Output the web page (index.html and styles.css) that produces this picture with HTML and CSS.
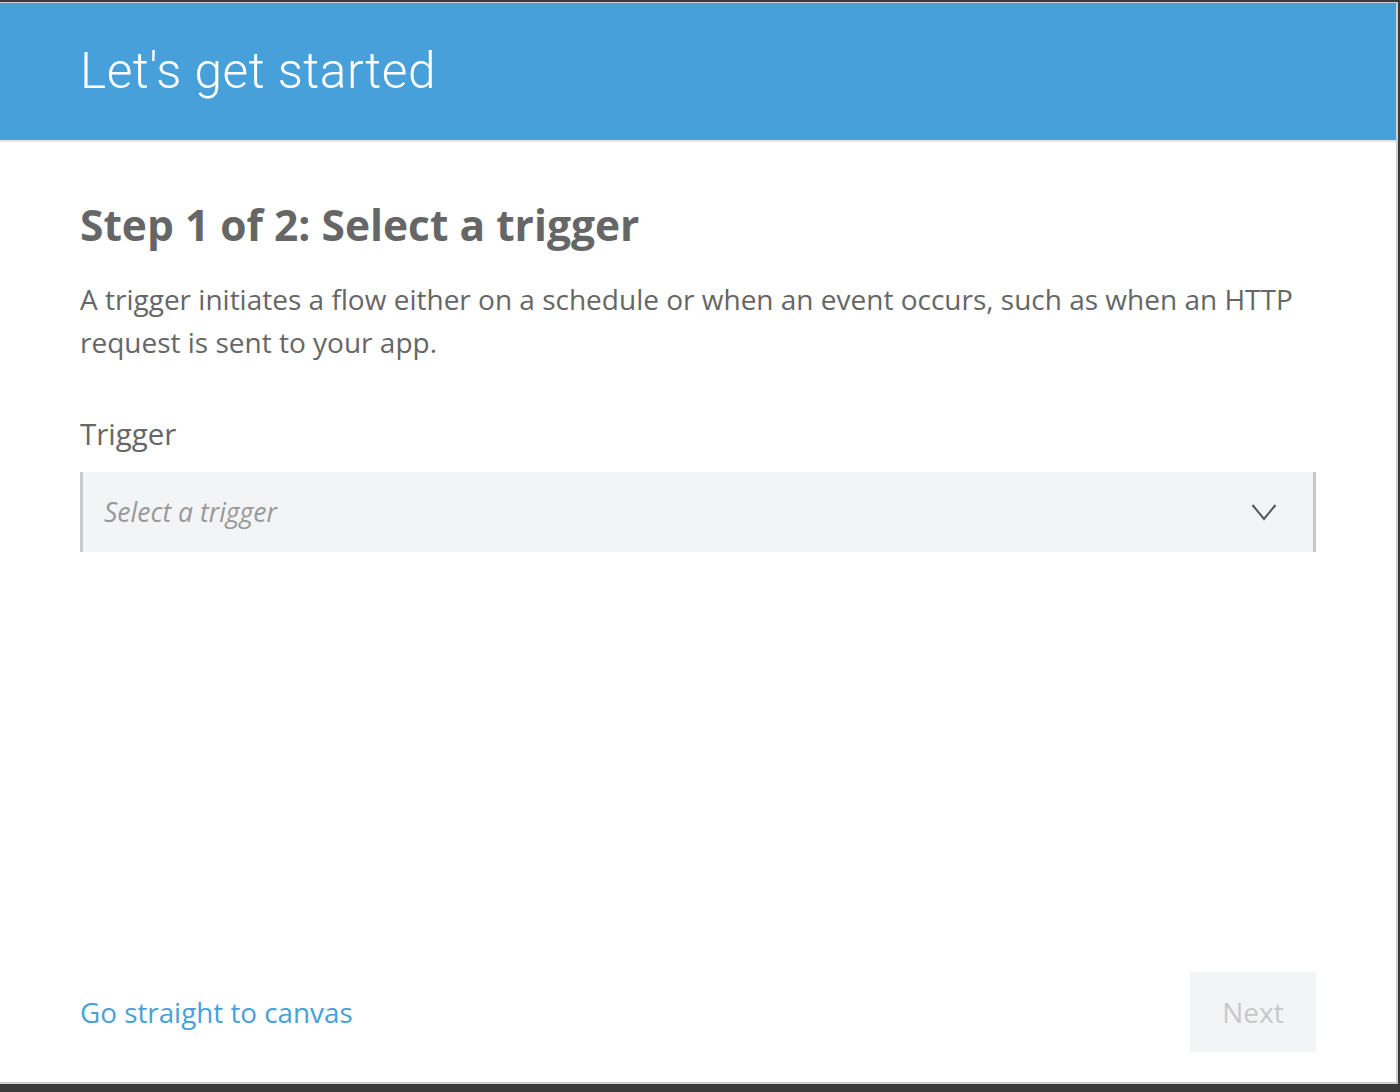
FILE: index.html
```html
<!DOCTYPE html>
<html>
<head>
<meta charset="utf-8">
<link rel="stylesheet" href="styles.css">
</head>
<body>
<div class="modal">
  <header class="modal-header">
    <h1 class="modal-title">Let's get started</h1>
  </header>
  <main class="modal-body">
    <h2 class="step-title">Step 1 of 2: Select a trigger</h2>
    <p class="step-desc">A trigger initiates a flow either on a schedule or when an event occurs, such as when an HTTP request is sent to your app.</p>
    <label class="field-label">Trigger</label>
    <div class="select">
      <span class="select-placeholder">Select a trigger</span>
      <svg class="select-chevron" width="26" height="18" viewBox="0 0 26 18"><path d="M1.5 2 L13 16 L24.5 2" fill="none" stroke="#555" stroke-width="2"/></svg>
    </div>
  </main>
  <footer class="modal-footer">
    <a class="canvas-link" href="#">Go straight to canvas</a>
    <button class="next-btn" disabled>Next</button>
  </footer>
</div>
</body>
</html>
```
FILE: styles.css
```css
html, body {
  margin: 0;
  padding: 0;
}
body {
  background: #3b3b3b;
  padding-top: 2px;
  height: 1092px;
  box-sizing: border-box;
  overflow: hidden;
  font-family: "Open Sans", "Liberation Sans", sans-serif;
}
.modal {
  margin-left: -1px;
  width: 1399px;
  height: 1082px;
  box-sizing: border-box;
  background: #fff;
  border: 1px solid #cfcfcf;
  border-bottom-width: 2px;
  border-right-width: 2px;
  display: flex;
  flex-direction: column;
}
.modal-header {
  background: #48a0da;
  height: 137px;
  border-bottom: 2px solid #e3e5e8;
  box-sizing: content-box;
  padding-left: 80px;
  display: flex;
  align-items: center;
}
.modal-title {
  margin: 0;
  color: #fff;
  font-family: Roboto, "DejaVu Sans", sans-serif;
  font-weight: 300;
  font-size: 49.6px;
  letter-spacing: 0.5px;
  line-height: 1;
}
.modal-body {
  flex: 1;
  padding: 0 80px;
}
.step-title {
  margin: 55px 0 0;
  font-size: 42.5px;
  font-weight: 700;
  color: #666;
  line-height: 56px;
}
.step-desc {
  margin: 25px 0 0;
  font-size: 28px;
  color: #666;
  line-height: 43px;
}
.field-label {
  display: block;
  margin-top: 50px;
  font-size: 29.5px;
  color: #666;
  line-height: 40px;
}
.select {
  margin-top: 18px;
  height: 80px;
  background: #f3f4f6;
  border-left: 3px solid #c9c9c9;
  border-right: 3px solid #c9c9c9;
  display: flex;
  align-items: center;
  justify-content: space-between;
  padding: 0 36px 0 21px;
}
.select-placeholder {
  font-style: italic;
  font-size: 26.5px;
  color: #999;
}
.select-chevron {
  display: block;
}
.modal-footer {
  display: flex;
  justify-content: space-between;
  align-items: center;
  padding: 0 80px 30px 80px;
}
.canvas-link {
  color: #48a0da;
  text-decoration: none;
  font-size: 27.8px;
}
.next-btn {
  width: 126px;
  height: 80px;
  border: none;
  background: #f3f4f6;
  color: #c8c8c8;
  font-family: "Open Sans", "Liberation Sans", sans-serif;
  font-size: 28px;
  padding: 0;
}
```
